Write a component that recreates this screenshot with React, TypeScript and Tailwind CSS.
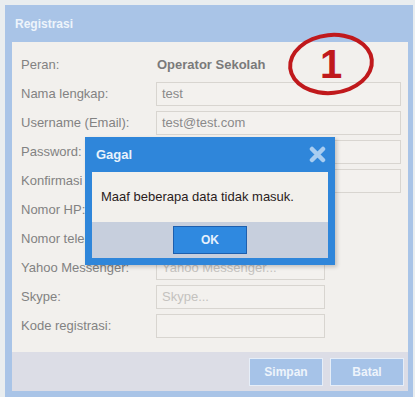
import React from "react";

const font = { fontFamily: '"Liberation Sans", Arial, sans-serif' };

function Row({ label, children }: { label: string; children?: React.ReactNode }) {
  return (
    <div className="flex items-center h-[29px]">
      <div className="w-[144px] pl-[9px] text-[13px] text-[#828282]">{label}</div>
      {children}
    </div>
  );
}

function Input({ value, placeholder, wide }: { value?: string; placeholder?: string; wide?: boolean }) {
  return (
    <div
      className={`${wide ? "w-[245px]" : "w-[169px]"} h-[24px] border border-[#d8d5d0] bg-[#f3f1ee] flex items-center px-[5px] text-[13px] ${value ? "text-[#8a8a8a]" : "text-[#c4c2be]"}`}
    >
      {value ?? placeholder ?? ""}
    </div>
  );
}

export default function App() {
  return (
    <div className="relative w-[415px] h-[397px] bg-[#e9edef] pt-[5px] pl-[5px] overflow-hidden" style={font}>
      <div className="w-[408px] h-[392px] bg-[#a9c4e7] flex flex-col pl-[7px] pr-[5px]">
        <div className="h-[37px] flex items-center pl-[3px] text-[12px] font-bold text-[#eef4fb]">Registrasi</div>
        <div className="h-[310px] bg-[#f2f0ed] pt-[8px] flex flex-col">
          <Row label="Peran:">
            <div className="pl-[1px] text-[13px] font-bold text-[#7a7a7a]">Operator Sekolah</div>
          </Row>
          <Row label="Nama lengkap:">
            <Input value="test" wide />
          </Row>
          <Row label="Username (Email):">
            <Input value="test@test.com" wide />
          </Row>
          <Row label="Password:">
            <Input wide />
          </Row>
          <Row label="Konfirmasi password:">
            <Input wide />
          </Row>
          <Row label="Nomor HP:">
            <Input />
          </Row>
          <Row label="Nomor telepon:">
            <Input />
          </Row>
          <Row label="Yahoo Messenger:">
            <Input placeholder="Yahoo Messenger..." />
          </Row>
          <Row label="Skype:">
            <Input placeholder="Skype..." />
          </Row>
          <Row label="Kode registrasi:">
            <Input />
          </Row>
        </div>
        <div className="h-[39px] bg-[#dcdde6] flex items-center justify-end gap-[7px] pr-[4px]">
          <div className="w-[74px] h-[28px] bg-[#a6c3e8] border border-[#e6eef8] flex items-center justify-center text-[12px] font-bold text-[#eef4fb]">
            Simpan
          </div>
          <div className="w-[74px] h-[28px] bg-[#a6c3e8] border border-[#e6eef8] flex items-center justify-center text-[12px] font-bold text-[#eef4fb]">
            Batal
          </div>
        </div>
      </div>

      {/* annotation */}
      <div className="absolute left-[288px] top-[33px] w-[86px] h-[62px] rounded-[50%] border-[4px] border-[#c0191c] -rotate-6 flex items-center justify-center">
        <span className="rotate-6 text-[40px] font-bold text-[#c0191c] leading-none">1</span>
      </div>

      {/* dialog */}
      <div className="absolute left-[85px] top-[137px] w-[250px] h-[128px] bg-[#2f86da] flex flex-col px-[7px] pb-[7px] shadow-[2px_2px_4px_rgba(0,0,0,0.2)]">
        <div className="h-[35px] flex items-center justify-between pl-[4px] pr-[2px]">
          <span className="text-[13px] font-bold text-[#e8f2fc]">Gagal</span>
          <svg width="17" height="17" viewBox="0 0 17 17">
            <path d="M3 3 L14 14 M14 3 L3 14" stroke="#a9cdf0" strokeWidth="4.5" strokeLinecap="round" />
          </svg>
        </div>
        <div className="h-[50px] bg-[#f2f0ec] flex items-center pl-[9px] text-[13px] text-[#2b1c1c]">
          Maaf beberapa data tidak masuk.
        </div>
        <div className="flex-1 bg-[#c7cfdd] flex items-center justify-center">
          <div className="w-[74px] h-[28px] bg-[#2f89e0] border border-[#1d5fae] flex items-center justify-center text-[12px] font-bold text-[#e6f1fc]">
            OK
          </div>
        </div>
      </div>
    </div>
  );
}
